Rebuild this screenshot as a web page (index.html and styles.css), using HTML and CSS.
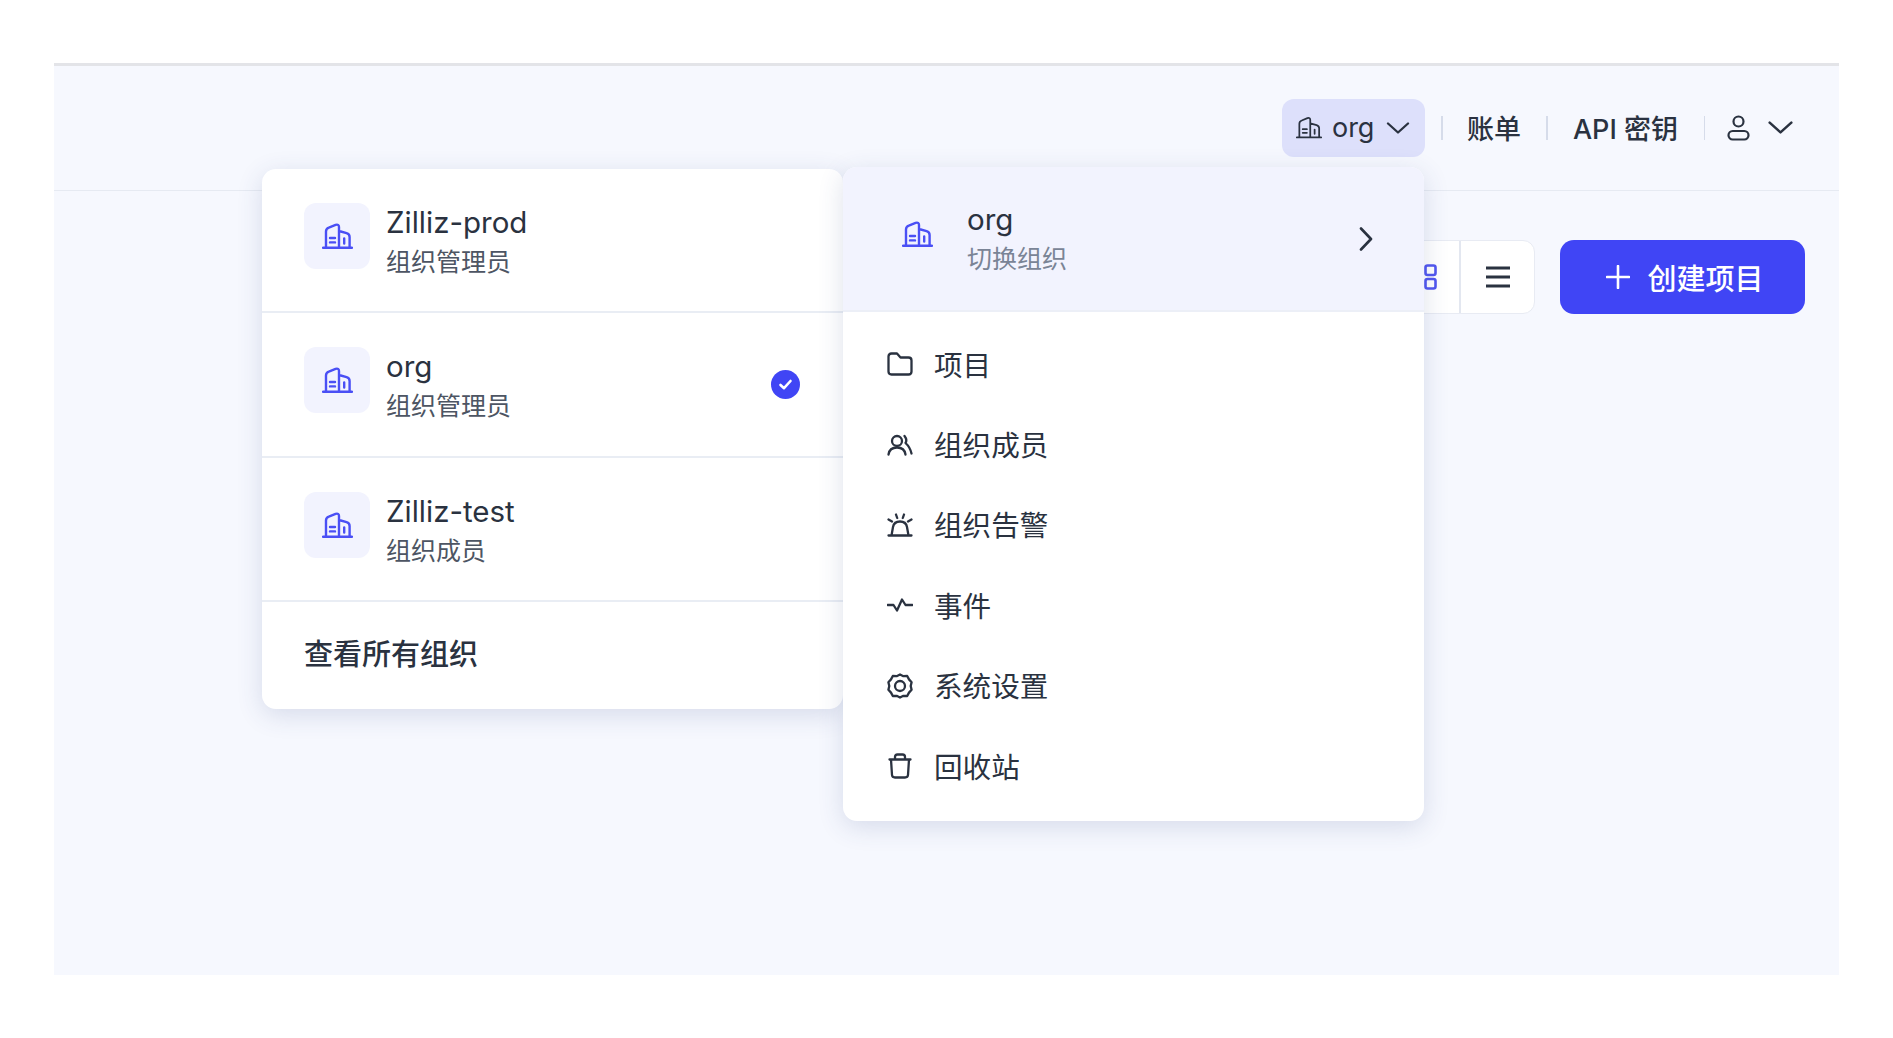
FILE: index.html
```html
<!DOCTYPE html>
<html lang="zh-CN">
<head>
  <meta charset="UTF-8">
  <meta name="viewport" content="width=device-width, initial-scale=1.0">
  <title>org</title>
  <link rel="stylesheet" href="styles.css">
</head>
<body>
  <svg class="icon-defs" aria-hidden="true">
    <symbol id="building" viewBox="0 0 31 26">
      <path d="M1 24.8H30M4 24.8V8.5Q4 5.6 6.8 4.6L13.6 1.9Q17 .9 17 4V24.8M17 8L24.6 10.2Q27.6 11.2 27.6 14V24.8M8 15H13M8 19.4H13M22.2 15.5V20.5"/>
    </symbol>
    <symbol id="chevron-down" viewBox="0 0 24 12">
      <path d="M2 1.5L12 10.5L22 1.5"/>
    </symbol>
  </svg>

  <div class="app">
    <header class="topbar">
      <button class="org-btn">
        <svg class="org-btn-icon"><use href="#building"/></svg>
        <span>org</span>
        <svg class="chev"><use href="#chevron-down"/></svg>
      </button>
      <span class="sep sep-first"></span>
      <a class="top-link">账单</a>
      <span class="sep sep-mid"></span>
      <a class="top-link">API 密钥</a>
      <span class="sep sep-last"></span>
      <svg class="user-icon" viewBox="0 0 23 26">
        <circle cx="11.5" cy="6.5" r="5"/>
        <rect x="1.5" y="16" width="20" height="8.5" rx="4.2"/>
      </svg>
      <svg class="chev chev-user"><use href="#chevron-down"/></svg>
    </header>

    <div class="toolbar">
      <div class="view-toggle">
        <div class="view-btn">
          <svg class="grid-icon" viewBox="0 0 34 26">
            <rect x="1.5" y="1.5" width="10" height="9.5" rx="2"/>
            <rect x="1.5" y="15" width="10" height="9.5" rx="2"/>
            <rect x="22.5" y="1.5" width="10" height="9.5" rx="2"/>
            <rect x="22.5" y="15" width="10" height="9.5" rx="2"/>
          </svg>
        </div>
        <div class="view-btn">
          <svg class="list-icon" viewBox="0 0 24 22">
            <path d="M0 2H24M0 11H24M0 20H24"/>
          </svg>
        </div>
      </div>
      <button class="create-btn">
        <svg class="plus" viewBox="0 0 24 24"><path d="M12 1V23M1 12H23"/></svg>
        创建项目
      </button>
    </div>

    <div class="panel panel-orgs">
      <div class="org-row">
        <div class="org-avatar"><svg class="building"><use href="#building"/></svg></div>
        <div class="org-text">
          <div class="org-name">Zilliz-prod</div>
          <div class="org-role">组织管理员</div>
        </div>
      </div>
      <div class="org-row">
        <div class="org-avatar"><svg class="building"><use href="#building"/></svg></div>
        <div class="org-text">
          <div class="org-name">org</div>
          <div class="org-role">组织管理员</div>
        </div>
        <svg class="check" viewBox="0 0 29 29">
          <circle cx="14.5" cy="14.5" r="14.5"/>
          <path d="M9.5 15L13 18.2L19.5 11"/>
        </svg>
      </div>
      <div class="org-row">
        <div class="org-avatar"><svg class="building"><use href="#building"/></svg></div>
        <div class="org-text">
          <div class="org-name">Zilliz-test</div>
          <div class="org-role">组织成员</div>
        </div>
      </div>
      <div class="all-orgs">查看所有组织</div>
    </div>

    <div class="panel panel-menu">
      <div class="menu-head">
        <svg class="building"><use href="#building"/></svg>
        <div class="org-text">
          <div class="org-name">org</div>
          <div class="org-switch">切换组织</div>
        </div>
        <svg class="chev-right" viewBox="0 0 14 24"><path d="M2 1.5L12 12L2 22.5"/></svg>
      </div>
      <ul class="menu-list">
        <li class="menu-item">
          <svg class="menu-icon" viewBox="0 0 26 24"><path d="M1.5 4.5Q1.5 1.5 4.5 1.5H10L13.5 5.5H21.5Q24.5 5.5 24.5 8.5V19.5Q24.5 22.5 21.5 22.5H4.5Q1.5 22.5 1.5 19.5Z"/></svg>
          项目
        </li>
        <li class="menu-item">
          <svg class="menu-icon" viewBox="0 0 26 24">
            <circle cx="10" cy="8" r="5"/>
            <path d="M1.5 21.5Q2.5 14.5 10 14.5Q17.5 14.5 18.5 21.5M17.5 3Q20.5 7 18.5 10Q23 14 24.5 20.5"/>
          </svg>
          组织成员
        </li>
        <li class="menu-item">
          <svg class="menu-icon" viewBox="0 0 26 24">
            <path d="M1.5 22.5H24.5M4.5 22.5L6 14Q7 8.5 13 8.5Q19 8.5 20 14L21.5 22.5M9 1.5L10.2 5M17 1.5L15.8 5M1.5 6.5L5 8.5M24.5 6.5L21 8.5"/>
          </svg>
          组织告警
        </li>
        <li class="menu-item">
          <svg class="menu-icon" viewBox="0 0 26 24">
            <path d="M0.5 12H6.5L10 17.5L15 6.5L18.5 12H25.5"/>
          </svg>
          事件
        </li>
        <li class="menu-item">
          <svg class="menu-icon" viewBox="0 0 26 26">
            <path d="M13 1.5L16.4 3.2L20.2 3L22 6.4L24.6 9.2L23.7 13L24.6 16.8L22 19.6L20.2 23L16.4 22.8L13 24.5L9.6 22.8L5.8 23L4 19.6L1.4 16.8L2.3 13L1.4 9.2L4 6.4L5.8 3L9.6 3.2Z"/>
            <circle cx="13" cy="13" r="5"/>
          </svg>
          系统设置
        </li>
        <li class="menu-item">
          <svg class="menu-icon" viewBox="0 0 26 26">
            <path d="M2.5 6.5H23.5M4 6.5L5 22Q5.2 24.5 8 24.5H18Q20.8 24.5 21 22L22 6.5M8 6.5V4Q8 1.5 10.5 1.5H15.5Q18 1.5 18 4V6.5"/>
          </svg>
          回收站
        </li>
      </ul>
    </div>
  </div>
</body>
</html>
```

FILE: styles.css
```css
* {
  box-sizing: border-box;
}
body {
  margin: 0;
  height: 1038px;
  overflow: hidden;
  background: #ffffff;
  color: #2a3240;
  font-family: Inter, "Noto Sans CJK SC", sans-serif;
}
svg {
  fill: none;
  stroke: currentColor;
  stroke-linecap: round;
  stroke-linejoin: round;
}
.icon-defs {
  display: none;
}
.app {
  position: relative;
  margin: 63px 54px 0;
  height: 912px;
  background: #f6f8fe;
  border-top: 3px solid #e3e4e8;
}
.topbar {
  display: flex;
  justify-content: flex-end;
  align-items: center;
  height: 125px;
  padding: 0 45px 1px 0;
  border-bottom: 1px solid #e6eaf2;
}
.org-btn {
  display: flex;
  align-items: center;
  width: 143px;
  height: 58px;
  padding: 0 0 0 14px;
  border: 0;
  border-radius: 12px;
  background: #dde0fb;
  color: #2a3240;
  font: 400 27px Inter, sans-serif;
}
.org-btn-icon {
  width: 26px;
  height: 23px;
  margin-right: 10px;
  stroke-width: 2.1;
}
.chev {
  width: 24px;
  height: 12px;
  margin-left: 12px;
  stroke-width: 2.3;
}
.chev-user {
  width: 27px;
  height: 13px;
  margin-left: 17px;
}
.sep {
  width: 2px;
  height: 24px;
  margin: 0 26px;
  background: #d6dcea;
}
.sep-first {
  margin: 0 24px 0 16px;
}
.sep-mid {
  margin: 0 25px;
}
.sep-last {
  margin-right: 22px;
  width: 1px;
}
.top-link {
  font-size: 27px;
  font-weight: 500;
  color: #2a3240;
}
.user-icon {
  width: 23px;
  height: 26px;
  stroke-width: 2.2;
}
.toolbar {
  display: flex;
  justify-content: flex-end;
  align-items: center;
  gap: 25px;
  margin-top: 49px;
  padding-right: 34px;
}
.view-toggle {
  display: flex;
  height: 74px;
  background: #ffffff;
  border: 1px solid #e8ebf3;
  border-radius: 12px;
}
.view-btn {
  display: flex;
  justify-content: center;
  align-items: center;
  width: 74px;
}
.view-btn + .view-btn {
  width: 75px;
  border-left: 2px solid #e3e7f0;
}
.grid-icon {
  width: 34px;
  height: 26px;
  margin-right: 4px;
  color: #5257f0;
  stroke-width: 2.6;
}
.list-icon {
  width: 24px;
  height: 22px;
  color: #2a3240;
  stroke-width: 2.8;
}
.create-btn {
  display: flex;
  justify-content: center;
  align-items: center;
  gap: 17px;
  width: 245px;
  height: 74px;
  padding-left: 11px;
  border: 0;
  border-radius: 14px;
  background: #4045f5;
  color: #ffffff;
  font: 500 29px Inter, "Noto Sans CJK SC", sans-serif;
}
.plus {
  width: 24px;
  height: 24px;
  stroke-width: 2.6;
}
.panel {
  position: absolute;
  background: #ffffff;
  border-radius: 14px;
  box-shadow: 0 6px 26px rgba(50, 70, 130, 0.16);
}
.panel-orgs {
  left: 208px;
  top: 103px;
  width: 581px;
  height: 540px;
}
.panel-menu {
  left: 789px;
  top: 101px;
  width: 581px;
  height: 654px;
  overflow: hidden;
}
.org-row {
  display: flex;
  align-items: flex-start;
  height: 144px;
  padding: 34px 43px 0 42px;
  border-bottom: 2px solid #e9edf4;
}
.org-row:nth-child(2) {
  height: 145px;
}
.org-avatar {
  display: flex;
  justify-content: center;
  align-items: center;
  flex: none;
  width: 66px;
  height: 66px;
  margin-right: 16px;
  border-radius: 12px;
  background: #f2f3fe;
}
.building {
  width: 31px;
  height: 26px;
  color: #4a4ff5;
  stroke-width: 2.4;
}
.org-text {
  flex: 1;
}
.org-name {
  height: 40px;
  margin-top: -1px;
  font-size: 29.5px;
  line-height: 40px;
}
.org-role {
  margin-top: 2px;
  font-size: 25px;
  line-height: 36px;
  color: #4d5563;
}
.check {
  flex: none;
  align-self: center;
  width: 29px;
  height: 29px;
  margin-top: -34px;
}
.check circle {
  fill: #4045f5;
  stroke: none;
}
.check path {
  stroke: #ffffff;
  stroke-width: 2.6;
}
.all-orgs {
  padding: 32px 42px 30px;
  font-size: 29px;
  font-weight: 500;
  line-height: 42px;
}
.menu-head {
  display: flex;
  align-items: flex-start;
  height: 145px;
  padding: 34px 51px 0 59px;
  background: #f2f3fe;
  border-bottom: 2px solid #eceff7;
}
.menu-head .building {
  flex: none;
  margin: 20px 34px 0 0;
}
.menu-head .org-name {
  margin-top: -2px;
}
.org-switch {
  margin-top: 2px;
  font-size: 25px;
  line-height: 36px;
  color: #7a8496;
}
.chev-right {
  flex: none;
  width: 14px;
  height: 24px;
  margin-top: 26px;
  stroke-width: 2.6;
}
.menu-list {
  margin: 0;
  padding: 11px 0 0 44px;
  list-style: none;
}
.menu-item {
  display: flex;
  align-items: center;
  height: 80.4px;
  font-size: 28.6px;
  color: #2a3240;
}
.menu-icon {
  flex: none;
  width: 26px;
  height: 26px;
  margin: 2px 21px 0 0;
  stroke-width: 2.3;
}
```
